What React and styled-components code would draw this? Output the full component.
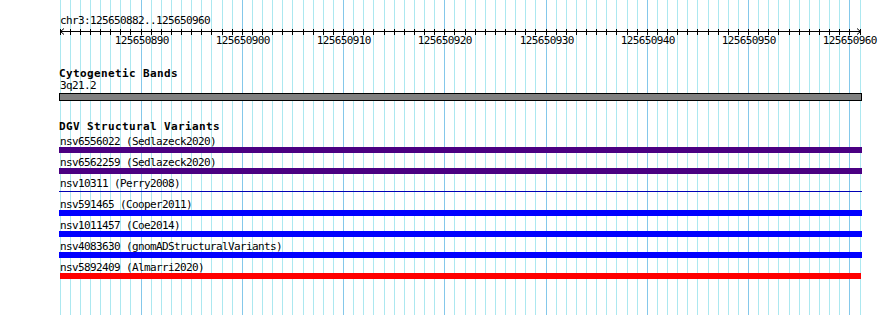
import React from 'react'
import styled, { createGlobalStyle } from 'styled-components'

const START = 125650882
const END = 125650960
const LEFT = 60
const RIGHT = 860
const HEIGHT = 315
const BP = (RIGHT - LEFT) / (END - START + 1)

const xOf = (i) => Math.floor(LEFT + i * BP)
const isMajor = (i) => (START + i) % 10 === 0
const positions = Array.from({ length: END - START + 2 }, (_, i) => i)

const variants = [
  { id: 'nsv6556022', source: 'Sedlazeck2020', color: '#4b0082' },
  { id: 'nsv6562259', source: 'Sedlazeck2020', color: '#4b0082' },
  { id: 'nsv10311', source: 'Perry2008', color: '#0000b4', thin: true },
  { id: 'nsv591465', source: 'Cooper2011', color: '#0000ff' },
  { id: 'nsv1011457', source: 'Coe2014', color: '#0000ff' },
  { id: 'nsv4083630', source: 'gnomADStructuralVariants', color: '#0000ff' },
  { id: 'nsv5892409', source: 'Almarri2020', color: '#ff0000', inset: true },
]

const GlobalStyle = createGlobalStyle`
  html, body {
    margin: 0;
    padding: 0;
    background: #fff;
  }
  body {
    font-family: 'DejaVu Sans Mono', 'Liberation Mono', monospace;
    color: #000;
  }
`

const Panel = styled.div`
  position: relative;
  width: 890px;
  height: ${HEIGHT}px;
  overflow: hidden;
  background: #fff;
`

const GridLayer = styled.svg`
  position: absolute;
  left: 0;
  top: 0;
`

const Content = styled.div`
  position: relative;
  display: flex;
  flex-direction: column;
  padding-top: 15px;
`

const RulerTitle = styled.div`
  padding-left: 60px;
  font-size: 11px;
  line-height: 12px;
  letter-spacing: -0.62px;
  white-space: nowrap;
`

const Axis = styled.svg`
  display: block;
  font-family: 'DejaVu Sans Mono', 'Liberation Mono', monospace;
  font-size: 11px;
  letter-spacing: -0.62px;
`

const TrackList = styled.div`
  display: flex;
  flex-direction: column;
  width: 803px;
  margin-left: 59px;
`

const Section = styled.section`
  display: flex;
  flex-direction: column;
  margin-top: ${(p) => p.$gap}px;
`

const TrackTitle = styled.div`
  font-size: 11px;
  font-weight: bold;
  line-height: 12px;
  letter-spacing: 0.38px;
  white-space: nowrap;
`

const FeatureLabel = styled.div`
  padding-left: 1px;
  margin-top: ${(p) => p.$gap || 0}px;
  font-size: 11px;
  line-height: 10px;
  height: 10px;
  letter-spacing: -0.62px;
  white-space: nowrap;
`

const BandBox = styled.div`
  box-sizing: border-box;
  height: 8px;
  margin-top: 2px;
  border: 1px solid #000;
  background: #808080;
`

const FeatureList = styled.div`
  display: flex;
  flex-direction: column;
  gap: 5px;
  margin-top: 4px;
`

const FeatureRow = styled.div`
  display: flex;
  flex-direction: column;
`

const Bar = styled.div`
  height: ${(p) => (p.$thin ? 1 : 6)}px;
  margin: ${(p) => (p.$thin ? '2px 0 3px' : p.$inset ? '0 1px' : '0')};
  background: ${(p) => p.$color};
`

function Grid() {
  return (
    <GridLayer width="890" height={HEIGHT}>
      {positions.map((i) => (
        <rect
          key={i}
          x={xOf(i)}
          y="0"
          width="1"
          height={HEIGHT}
          fill={isMajor(i) ? '#84c8ea' : '#ace8f0'}
        />
      ))}
    </GridLayer>
  )
}

function Ruler() {
  return (
    <Axis width="890" height="23">
      <rect x={LEFT} y="4" width={RIGHT - LEFT + 1} height="1" fill="#000" />
      {positions.map((i) => (
        <rect key={i} x={xOf(i)} y="2" width="1" height="6" fill="#000" />
      ))}
      <polyline
        points={`${LEFT + 4},1.5 ${LEFT + 0.5},4.5 ${LEFT + 4},7.5`}
        fill="none"
        stroke="#000"
        strokeWidth="1"
      />
      <polyline
        points={`${RIGHT - 3},1.5 ${RIGHT + 0.5},4.5 ${RIGHT - 3},7.5`}
        fill="none"
        stroke="#000"
        strokeWidth="1"
      />
      {positions.filter(isMajor).map((i) => (
        <text key={i} x={xOf(i) + 0.8} y="17" textAnchor="middle" fill="#000">
          {START + i}
        </text>
      ))}
    </Axis>
  )
}

export default function App() {
  return (
    <Panel>
      <GlobalStyle />
      <Grid />
      <Content>
        <RulerTitle>
          chr3:{START}..{END}
        </RulerTitle>
        <Ruler />
        <TrackList>
          <Section $gap={18}>
            <TrackTitle>Cytogenetic Bands</TrackTitle>
            <FeatureLabel $gap={1}>3q21.2</FeatureLabel>
            <BandBox />
          </Section>
          <Section $gap={20}>
            <TrackTitle>DGV Structural Variants</TrackTitle>
            <FeatureList>
              {variants.map((v) => (
                <FeatureRow key={v.id}>
                  <FeatureLabel>
                    {v.id} ({v.source})
                  </FeatureLabel>
                  <Bar $color={v.color} $thin={v.thin} $inset={v.inset} />
                </FeatureRow>
              ))}
            </FeatureList>
          </Section>
        </TrackList>
      </Content>
    </Panel>
  )
}
